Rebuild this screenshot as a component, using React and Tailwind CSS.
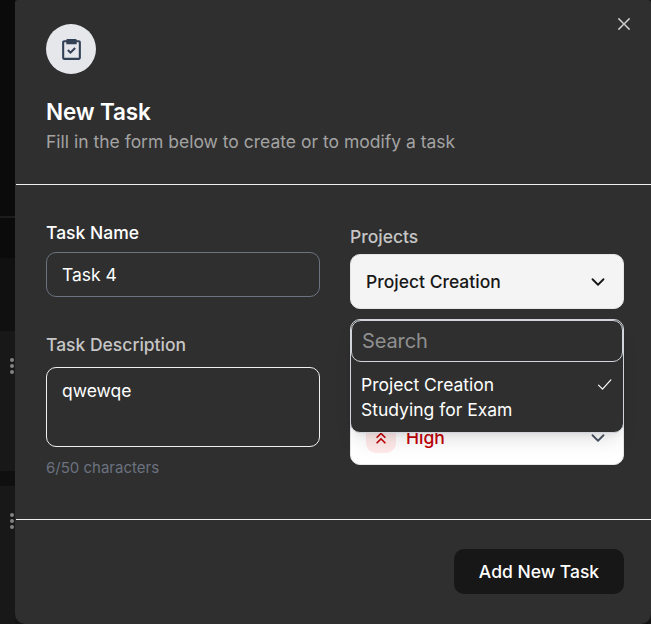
import { BiTask } from "react-icons/bi";
import { RxCross2 } from "react-icons/rx";
import { MdKeyboardDoubleArrowUp } from "react-icons/md";
import { ChevronDown } from "lucide-react";

function Dots() {
  return (
    <div className="ml-[10px] flex flex-col gap-[2px]">
      <span className="size-1 rounded-full bg-[#828282]" />
      <span className="size-1 rounded-full bg-[#828282]" />
      <span className="size-1 rounded-full bg-[#828282]" />
    </div>
  );
}

function Backdrop() {
  return (
    <div className="flex w-[15px] shrink-0 flex-col bg-[#0b0b0b]">
      <div className="h-[216px]" />
      <div className="h-[2px] bg-[#1c1c1c]" />
      <div className="h-10" />
      <div className="h-[73px] bg-[#101010]" />
      <div className="flex h-[140px] items-start bg-[#181818] pt-[27px]">
        <Dots />
      </div>
      <div className="h-[15px] bg-[#0f0f0f]" />
      <div className="flex flex-1 items-start bg-[#181818] pt-[27px]">
        <Dots />
      </div>
    </div>
  );
}

function CheckMark() {
  return (
    <svg
      viewBox="0 0 24 24"
      className="-mr-[1px] size-[19px]"
      fill="none"
      stroke="currentColor"
      strokeWidth="1.5"
      strokeLinecap="round"
      strokeLinejoin="round"
    >
      <path d="m4.5 12.75 5 5 10.5-11.5" />
    </svg>
  );
}

function Menu() {
  return (
    <div className="absolute top-[65px] left-0 h-[114px] w-full rounded-[10px] border border-[#d1d5db] bg-[#2f2f2f] shadow-[0_12px_19px_-4px_rgba(0,0,0,0.1),0_5px_8px_-5px_rgba(0,0,0,0.1)]">
      <input
        placeholder="Search"
        className="block h-[42px] w-full rounded-[10px] border border-[#d1d5db] px-2.5 text-[20px] leading-[30px] tracking-[-0.1px] placeholder:text-[#8f8f8f]"
      />
      <div className="px-2.5 pt-[10px] text-[17.5px] leading-[25px] text-white">
        <div className="flex items-center justify-between">
          <span>Project Creation</span>
          <CheckMark />
        </div>
        <div>Studying for Exam</div>
      </div>
    </div>
  );
}

export default function App() {
  return (
    <div className="flex h-[624px] w-[651px] overflow-hidden bg-[#141414] font-['Inter',sans-serif] text-[17.5px] leading-[25px] text-white">
      <Backdrop />
      <main className="flex flex-1 flex-col rounded-[10px] rounded-t-[3px] bg-[#2f2f2f] pl-px">
        <header className="flex h-[185px] items-start justify-between border-b border-[#f0f0f0] pl-[30px]">
          <div className="pt-6">
            <div className="flex size-[50px] items-center justify-center rounded-full bg-[#e5e7eb] text-[#334155]">
              <BiTask size={25} />
            </div>
            <h1 className="mt-[25px] text-[22.5px] leading-[25px] font-semibold tracking-[-0.15px]">New Task</h1>
            <p className="mt-[5px] leading-[25px] text-[#a3a3a3]">
              Fill in the form below to create or to modify a task
            </p>
          </div>
          <RxCross2 size={20} className="mt-[14px] mr-[17px] text-[#c9c9c9]" />
        </header>

        <section className="grid h-[335px] grid-cols-[274px_274px] gap-[30px] border-b border-[#f0f0f0] pt-[35px] pl-[30px]">
          <div>
            <label className="block font-medium">Task Name</label>
            <input
              defaultValue="Task 4"
              className="mt-[7px] block h-[45px] w-full rounded-[10px] border border-[#6b7280] px-[15px]"
            />
            <label className="mt-[35px] block font-medium text-[#c6c6c6]">Task Description</label>
            <textarea
              defaultValue="qwewqe"
              className="mt-[10px] block h-20 w-full resize-none rounded-[10px] border border-[#f0f0f0] px-[15px] pt-[10px]"
            />
            <p className="mt-[11px] text-[15px] leading-5 text-[#6b7280]">6/50 characters</p>
          </div>
          <div className="pt-1">
            <label className="block font-medium text-[#c6c6c6]">Projects</label>
            <div className="relative mt-[5px]">
              <button className="flex h-[55px] w-full items-center justify-between rounded-[10px] border border-[#e5e5e5] bg-[#f4f4f4] pr-[14px] pl-[15px] font-medium text-[#171717]">
                Project Creation
                <ChevronDown size={22} />
              </button>
              <Menu />
            </div>
            <button className="mt-[101px] flex h-[55px] w-full items-center justify-between rounded-[10px] border border-[#e5e7eb] bg-white pr-[14px] pl-[15px] font-medium text-[#c10007]">
              <span className="flex items-center gap-2.5">
                <span className="flex size-[30px] items-center justify-center rounded-[10px] bg-[#ffe9e9]">
                  <MdKeyboardDoubleArrowUp size={20} />
                </span>
                High
              </span>
              <ChevronDown size={22} className="text-[#4b5563]" />
            </button>
          </div>
        </section>

        <footer className="flex justify-end pt-[29px] pr-[27px]">
          <button className="h-[45px] w-[170px] rounded-[10px] bg-[#171717] font-medium">Add New Task</button>
        </footer>
      </main>
    </div>
  );
}
